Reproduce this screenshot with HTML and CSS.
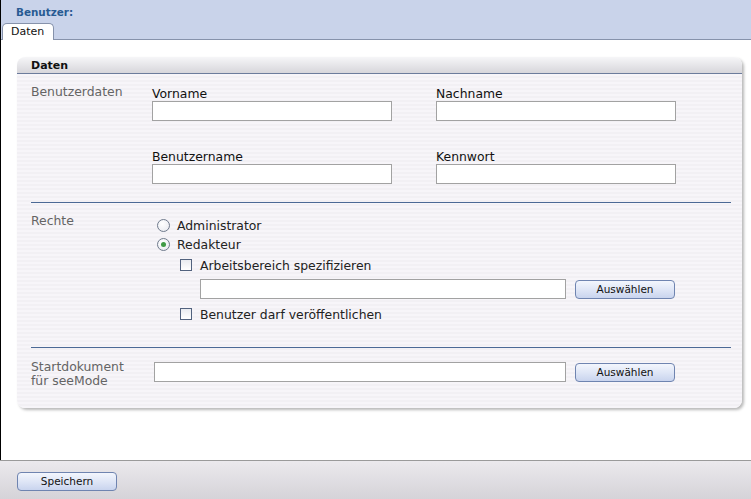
FILE: index.html
```html
<!DOCTYPE html>
<html lang="de">
<head>
<meta charset="utf-8">
<title>Benutzer</title>
<link rel="stylesheet" href="styles.css">
</head>
<body>
<div class="main">
  <div class="topbar">
    <div class="title">Benutzer:</div>
    <div class="tabs"><div class="tab">Daten</div></div>
  </div>
  <div class="content">
    <div class="panel">
      <div class="panel-head">Daten</div>
      <div class="panel-body">
        <div class="section s1">
          <div class="sec-label">Benutzerdaten</div>
          <div class="fields">
            <div class="field"><label>Vorname</label><input class="txt" type="text"></div>
            <div class="field"><label>Nachname</label><input class="txt" type="text"></div>
            <div class="field"><label>Benutzername</label><input class="txt" type="text"></div>
            <div class="field"><label>Kennwort</label><input class="txt" type="password"></div>
          </div>
        </div>
        <div class="sep"></div>
        <div class="section s2">
          <div class="sec-label">Rechte</div>
          <div class="rights">
            <label class="opt"><input class="radio" type="radio" name="r">Administrator</label>
            <label class="opt"><input class="radio" type="radio" name="r" checked>Redakteur</label>
            <div class="sub">
              <label class="opt chk-row"><input class="check" type="checkbox">Arbeitsbereich spezifizieren</label>
              <div class="pick"><input class="txt wide" type="text"><button class="btn">Auswählen</button></div>
              <label class="opt chk-row2"><input class="check" type="checkbox">Benutzer darf veröffentlichen</label>
            </div>
          </div>
        </div>
        <div class="sep"></div>
        <div class="section s3">
          <div class="sec-label two">Startdokument<br>für seeMode</div>
          <div class="pick start"><input class="txt wide2" type="text"><button class="btn">Auswählen</button></div>
        </div>
      </div>
    </div>
  </div>
</div>
<div class="footer">
  <button class="btn save">Speichern</button>
</div>
</body>
</html>
```

FILE: styles.css
```css
html, body {
  margin: 0;
  padding: 0;
  background: #ffffff;
  font-family: "DejaVu Sans", Verdana, sans-serif;
  font-size: 12.4px;
  color: #111;
}

.main {
  height: 460px;
  border-left: 1px solid #000;
  box-sizing: border-box;
  display: flex;
  flex-direction: column;
}

.topbar {
  background: #c9d3ea;
  height: 40px;
  box-sizing: border-box;
  border-bottom: 1px solid #8692ab;
  display: flex;
  flex-direction: column;
  justify-content: space-between;
}

.title {
  font-weight: bold;
  font-size: 10.4px;
  color: #285b93;
  padding: 6px 0 0 15px;
  line-height: 13px;
}

.tabs {
  display: flex;
  padding-left: 1px;
  margin-bottom: -1px;
}

.tab {
  background: #fff;
  border: 1px solid #8692ab;
  border-bottom: none;
  border-radius: 5px 5px 0 0;
  font-size: 11px;
  line-height: 16px;
  padding: 0 9px 0 8px;
  width: 33px;
  color: #111;
}

.content {
  padding: 17px 9px 0 16px;
}

.panel {
  width: 725px;
  border-radius: 8px;
  box-shadow: 2px 2px 3px rgba(0, 0, 0, 0.28);
  overflow: hidden;
}

.panel-head {
  height: 16px;
  line-height: 17px;
  padding-left: 14px;
  font-weight: bold;
  font-size: 11px;
  color: #111;
  background: linear-gradient(#f6f6f8, #d7d6db);
  border-bottom: 1px solid #6c7c9c;
}

.panel-body {
  background: repeating-linear-gradient(#f7f5f9 0px, #f7f5f9 2px, #f2f0f4 2px, #f2f0f4 4px);
  padding-bottom: 20px;
}

.section {
  display: flex;
  padding-left: 14px;
}

.sec-label {
  width: 121px;
  color: #646464;
  line-height: 14px;
}

.sec-label.two {
  line-height: 14px;
  width: 123px;
}

.s1 {
  padding-top: 11px;
  padding-bottom: 18px;
}

.fields {
  display: grid;
  grid-template-columns: 240px 240px;
  column-gap: 44px;
  row-gap: 29px;
  padding-top: 2px;
}

.field label {
  display: block;
  line-height: 14px;
  color: #111;
}

.txt {
  display: block;
  box-sizing: border-box;
  height: 20px;
  width: 240px;
  margin: 0;
  border: 1px solid #a2a2a2;
  background: #fff;
  padding: 0 3px;
  font: inherit;
}

.sep {
  height: 1px;
  background: #4b6995;
  margin: 0 11px 0 14px;
}

.s2 {
  padding-top: 11px;
  padding-bottom: 23px;
}

.rights {
  padding-top: 2px;
  padding-left: 5px;
}

.opt {
  display: flex;
  align-items: center;
  height: 18px;
  margin-bottom: 1px;
  color: #222;
}

.radio {
  appearance: none;
  -webkit-appearance: none;
  width: 13px;
  height: 13px;
  margin: 0 7px 0 0;
  border: 1px solid #6f7a8c;
  border-radius: 50%;
  background: radial-gradient(circle at 40% 35%, #ffffff, #e6e8ee);
  box-sizing: border-box;
  position: relative;
}

.radio:checked::after {
  content: "";
  position: absolute;
  left: 3px;
  top: 3px;
  width: 5px;
  height: 5px;
  border-radius: 50%;
  background: #3f9a45;
}

.sub {
  padding-left: 23px;
}

.opt.chk-row {
  margin-top: 3px;
}

.check {
  appearance: none;
  -webkit-appearance: none;
  width: 12px;
  height: 12px;
  margin: 0 8px 0 0;
  border: 1px solid #52627e;
  background: linear-gradient(#e9ebf0, #ffffff);
  box-sizing: border-box;
}

.pick {
  display: flex;
  align-items: center;
  margin-top: 5px;
}

.txt.wide {
  width: 366px;
  margin-left: 20px;
  height: 20px;
}

.btn {
  box-sizing: border-box;
  width: 100px;
  height: 19px;
  margin: 1px 0 0 9px;
  padding: 0;
  border: 1px solid #6f84b0;
  border-radius: 4px;
  background: linear-gradient(#f3f6fd, #dfe6f6 50%, #c9d4ee);
  font-family: "DejaVu Sans", Verdana, sans-serif;
  font-size: 10.5px;
  color: #111;
  line-height: 17px;
}

.opt.chk-row2 {
  margin-top: 6px;
}

.s3 {
  padding-top: 12px;
}

.pick.start {
  margin-top: 2px;
  align-self: flex-start;
}

.txt.wide2 {
  width: 412px;
  height: 20px;
}

.footer {
  height: 39px;
  box-sizing: border-box;
  border-top: 1px solid #9a9a9a;
  background: linear-gradient(#ebe9ed, #d5d3d8);
  padding: 11px 0 0 17px;
}

.btn.save {
  margin: 0;
  width: 100px;
  height: 19px;
}
```
